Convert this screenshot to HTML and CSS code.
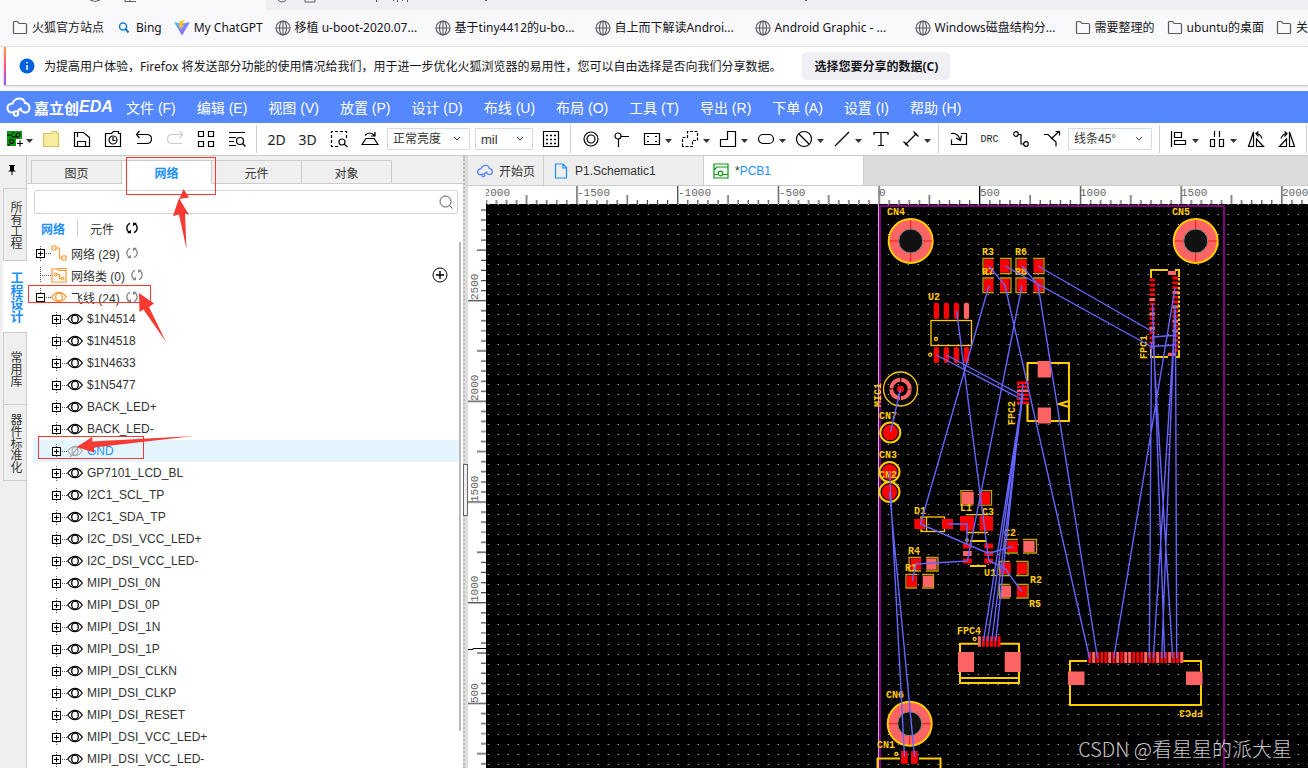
FILE: index.html
```html
<!DOCTYPE html>
<html lang="zh-CN">
<head>
    <meta charset="UTF-8">
    <meta name="viewport" content="width=device-width, initial-scale=1.0">
    <title>嘉立创EDA - PCB1</title>
    <link rel="stylesheet" href="styles.css">
</head>
<body>
    <!-- shared icons -->
    <svg class="sprite" aria-hidden="true">
        <symbol id="folder" viewBox="0 0 16 16"><path d="M1.500 12.500v-10q0-1 1-1h3l1.500 2h6.500q1 0 1 1v8q0 1-1 1h-11q-1 0-1-1z" fill="none" stroke="#5b5b66" stroke-width="1.200"/></symbol>
        <symbol id="globe" viewBox="0 0 16 16"><g fill="none" stroke="#5b5b66" stroke-width="1.200"><circle cx="8" cy="8" r="7"/><ellipse cx="8" cy="8" rx="3.500" ry="7"/><path d="M1 8h14M8 1v14"/></g></symbol>
        <symbol id="caret" viewBox="0 0 9 6"><path d="M1 1h7L4.500 5z" fill="#333"/></symbol>
        <symbol id="plus-box" viewBox="0 0 15 22"><path d="M4.500 4v3M4.500 16v3M10 11.500h5" stroke="#555" stroke-dasharray="1 1" fill="none"/><rect x=".5" y="7.500" width="8" height="8" fill="#fff" stroke="#000"/><path d="M2 11.500h5M4.500 9v5" stroke="#000"/></symbol>
        <symbol id="minus-box" viewBox="0 0 15 22"><path d="M4.500 2v5M10 11.500h5" stroke="#555" stroke-dasharray="1 1" fill="none"/><rect x=".5" y="7.500" width="8" height="8" fill="#fff" stroke="#000"/><path d="M2 11.500h5" stroke="#000"/></symbol>
        <symbol id="branch" viewBox="0 0 15 22"><path d="M4.500 3v15M6 11.500h9" stroke="#555" stroke-dasharray="1 1" fill="none"/></symbol>
        <symbol id="eye" viewBox="0 0 16 16"><g fill="none" stroke="currentColor" stroke-width="1.300"><path d="M.7 8Q4 3.300 8 3.300T15.300 8Q12 12.700 8 12.700T.7 8z"/><ellipse cx="8" cy="8" rx="3.300" ry="4"/></g></symbol>
        <symbol id="eye-off" viewBox="0 0 16 16"><g fill="none" stroke="#aaa" stroke-width="1.200"><path d="M.7 8Q4 3.300 8 3.300T15.300 8Q12 12.700 8 12.700T.7 8z"/><ellipse cx="8" cy="8" rx="3" ry="4"/><path d="M13 2L3 14"/></g></symbol>
        <symbol id="refresh" viewBox="0 0 12 12"><g fill="none" stroke="currentColor" stroke-width="1.300"><path d="M3.500 10.500Q.8 9 .8 6T4 1.300M8.500 1.500q2.700 1.500 2.700 4.500T8 10.700"/></g><path d="M1 11.300h4V7.800zM11 .7H7v3.500z" fill="currentColor"/></symbol>
        <symbol id="cloud" viewBox="0 0 24 20"><g fill="none" stroke="currentColor" stroke-width="2"><path d="M8 15.500H6Q1 15.500 1 11q0-4 5-4.500Q8 1.500 13 1.500q4.500 0 5.500 4.500 4.500.5 4.500 5 0 4-4 4.500-3 0-5-3"/><circle cx="9.500" cy="16.500" r="2.200"/><path d="M11 15q1.500-3.500 4.500-3.500"/></g></symbol>
    </svg>

    <div class="urlbar">
        <svg width="1308" height="3" fill="none" stroke="#5b5b66">
            <path d="M90 0q5 3 10 0M125 1.500h11M125 0v2M130 0v2M278 0q4 4 8 0M305 0v2h10v-2M376.500 0v2M393.500 0v1M397.500 0v2M402.500 0v1M407.500 0v2M485 .5h2M805 .5h2"/>
        </svg>
    </div>
    <nav class="bookmarks">
        <a href="#"><svg><use href="#folder"/></svg>火狐官方站点</a>
        <a href="#"><svg viewBox="0 0 16 16"><circle cx="7" cy="6.500" r="3.500" fill="none" stroke="#1b7fc9" stroke-width="1.500"/><path d="M9.500 9l3 3.500" stroke="#1b7fc9" stroke-width="2"/></svg>Bing</a>
        <a href="#"><svg viewBox="0 0 16 16"><defs><linearGradient id="vite" x1="0" y1="0" x2="1" y2="1"><stop stop-color="#41d1ff"/><stop offset="1" stop-color="#bd34fe"/></linearGradient></defs><path d="M0 2l8 13.500L16 2 8 3.500z" fill="url(#vite)"/><path d="M11 0L5.500 1.200 5 7.500l2.200-.5L6.500 10l3.500-5-2.500.5z" fill="#ffc91f"/></svg>My ChatGPT</a>
        <a href="#" class="long"><svg><use href="#globe"/></svg>移植 u-boot-2020.07...</a>
        <a href="#" class="long"><svg><use href="#globe"/></svg>基于tiny4412的u-bo...</a>
        <a href="#" class="long"><svg><use href="#globe"/></svg>自上而下解读Androi...</a>
        <a href="#" class="long"><svg><use href="#globe"/></svg>Android Graphic - ...</a>
        <a href="#" class="long"><svg><use href="#globe"/></svg>Windows磁盘结构分...</a>
        <a href="#"><svg><use href="#folder"/></svg>需要整理的</a>
        <a href="#"><svg><use href="#folder"/></svg>ubuntu的桌面</a>
        <a href="#"><svg><use href="#folder"/></svg>关</a>
    </nav>
    <div class="notice">
        <svg width="16" height="16"><circle cx="8" cy="8" r="7.500" fill="#0060df"/><path d="M8 7v5M8 4v1.500" stroke="#fff" stroke-width="1.500"/></svg>
        <span>为提高用户体验，Firefox 将发送部分功能的使用情况给我们，用于进一步优化火狐浏览器的易用性，您可以自由选择是否向我们分享数据。</span>
        <button type="button">选择您要分享的数据(C)</button>
    </div>

    <header class="menubar">
        <div class="logo"><svg><use href="#cloud"/></svg>嘉立创<em>EDA</em></div>
        <button type="button">文件 (F)</button>
        <button type="button">编辑 (E)</button>
        <button type="button">视图 (V)</button>
        <button type="button">放置 (P)</button>
        <button type="button">设计 (D)</button>
        <button type="button">布线 (U)</button>
        <button type="button">布局 (O)</button>
        <button type="button">工具 (T)</button>
        <button type="button">导出 (R)</button>
        <button type="button">下单 (A)</button>
        <button type="button">设置 (I)</button>
        <button type="button">帮助 (H)</button>
    </header>

    <div class="toolbar">
        <button type="button" class="drop first" aria-label="新建"><svg viewBox="0 0 18 18"><path d="M1 1h15v15H1z" fill="#0a9a10" stroke="none"/><path d="M1 5h4l2 2h4M7 2v2M3 16v-2"/><circle cx="12" cy="5" r="2"/><circle cx="5.500" cy="11.500" r="2"/><path d="M10 9h8v9h-8z" fill="#fff" stroke="none"/><path d="M11 13.500h6M14 10.500v6"/></svg><svg class="caret"><use href="#caret"/></svg></button>
        <button type="button" aria-label="打开"><svg viewBox="0 0 18 18"><path d="M1.500 16.500v-13h8l1-2h4v2h2v13z" fill="#f9eca0" stroke="#d8c45c"/></svg></button>
        <button type="button" aria-label="保存"><svg viewBox="0 0 18 18"><path d="M1.500 16.500v-14h9l6 5v9zM4.500 16.500v-5h8v5M4.500 3v4"/></svg></button>
        <button type="button" aria-label="历史"><svg viewBox="0 0 18 18"><path d="M1.500 16.500v-13h6l2-2h5v2h2v13z"/><circle cx="9" cy="10" r="4"/><path d="M9 7v3.500h2.500"/></svg></button>
        <button type="button" aria-label="撤销"><svg viewBox="0 0 18 18"><path d="M4.500 1L1.500 4.500 4.500 8M1.500 4.500h10q5 0 5 4.500t-5 4.500H2"/></svg></button>
        <button type="button" aria-label="重做" class="off"><svg viewBox="0 0 18 18"><path d="M13.500 1l3 3.500-3 3.500M16.500 4.500h-10q-5 0-5 4.500t5 4.500H16"/></svg></button>
        <button type="button" aria-label="阵列"><svg viewBox="0 0 18 18"><path d="M1.500 1.500h5v5h-5zM11.500 1.500h5v5h-5zM1.500 11.500h5v5h-5zM11.500 11.500h5v5h-5z"/></svg></button>
        <button type="button" aria-label="查找"><svg viewBox="0 0 18 18"><path d="M1 2.500h16M1 7.500h7M1 11.500h5M1 15.500h7"/><circle cx="12" cy="11" r="3.500"/><path d="M14.500 13.500l3 3"/></svg></button>
        <i class="sep"></i>
        <button type="button" class="word">2D</button>
        <button type="button" class="word">3D</button>
        <button type="button" aria-label="框选缩放"><svg viewBox="0 0 18 18"><path d="M8 16.500H1.500v-15h15V8" stroke-dasharray="3 2"/><circle cx="12" cy="12" r="3"/><path d="M14 14l3.500 3"/></svg></button>
        <button type="button" aria-label="亮度"><svg viewBox="0 0 18 18"><path d="M1 14.500h16l-4-6H5zM4 5.500q4.500-5 9.500 0M14 2v4h-4"/></svg></button>
        <select class="bright" aria-label="亮度"><option>正常亮度</option></select>
        <select class="unit" aria-label="单位"><option>mil</option></select>
        <button type="button" aria-label="网格"><svg viewBox="0 0 18 18"><path d="M1.500 1.500h15v15h-15z"/><path d="M4 5.500h11M4 9.500h11M4 13.500h11" stroke-width="1.500" stroke-dasharray="2 2"/></svg></button>
        <i class="sep"></i>
        <button type="button" aria-label="过孔"><svg viewBox="0 0 18 18"><circle cx="9" cy="9" r="7"/><circle cx="9" cy="9" r="4"/></svg></button>
        <button type="button" aria-label="测试点"><svg viewBox="0 0 18 18"><circle cx="5" cy="6" r="3"/><path d="M8 6.500h8M5.500 9v8"/></svg></button>
        <button type="button" class="drop" aria-label="焊盘"><svg viewBox="0 0 18 18"><path d="M1.500 3.500h15v11h-15z"/><path d="M4 6.500h2M12 6.500h2M4 11.500h2M12 11.500h2"/></svg><svg class="caret"><use href="#caret"/></svg></button>
        <button type="button" class="drop" aria-label="填充"><svg viewBox="0 0 18 18"><path d="M1.500 16.500v-9h5v-6h10v9h-5v6z" stroke-dasharray="3 1.500"/></svg><svg class="caret"><use href="#caret"/></svg></button>
        <button type="button" class="drop" aria-label="铺铜"><svg viewBox="0 0 18 18"><path d="M1.500 16.500v-7h7v-8h8v15z"/></svg><svg class="caret"><use href="#caret"/></svg></button>
        <button type="button" class="drop" aria-label="挖槽"><svg viewBox="0 0 18 18"><rect x="1.500" y="4.500" width="15" height="9" rx="4.500"/></svg><svg class="caret"><use href="#caret"/></svg></button>
        <button type="button" class="drop" aria-label="禁止区"><svg viewBox="0 0 18 18"><circle cx="9" cy="9" r="7.500"/><path d="M4 4l10 10"/></svg><svg class="caret"><use href="#caret"/></svg></button>
        <button type="button" class="drop" aria-label="线条"><svg viewBox="0 0 18 18"><path d="M2 16L16 2"/></svg><svg class="caret"><use href="#caret"/></svg></button>
        <button type="button" aria-label="文本"><svg viewBox="0 0 18 18"><path d="M2 5V2.500h14V5M9 2.500v13M6 15.500h6"/></svg></button>
        <button type="button" class="drop" aria-label="尺寸"><svg viewBox="0 0 18 18"><path d="M3.500 14.500L14.500 3.500M1.500 11.500l5 5M11.500 1.500l5 5"/><path d="M3 15l.5-3L6 14.500zM15 3l-3 .5L14.500 6z" fill="#000" stroke="none"/></svg><svg class="caret"><use href="#caret"/></svg></button>
        <i class="sep"></i>
        <button type="button" aria-label="导入变更"><svg viewBox="0 0 18 18"><path d="M11 3.500h5.500v11h-15v-5M1 3.500q7-1 9 6M6 8l4.500 2.500 1-5"/></svg></button>
        <button type="button" class="word drc">DRC</button>
        <button type="button" aria-label="布线"><svg viewBox="0 0 18 18"><circle cx="4" cy="4" r="2.300"/><circle cx="14" cy="14" r="2.300"/><path d="M6 4.500h3v9.500h3"/></svg></button>
        <button type="button" aria-label="布线跟随"><svg viewBox="0 0 18 18"><path d="M1 4.500h4l8 7.500v4.500M8 9l8-7.500M12.500 1.500h4v4"/></svg></button>
        <select class="angle" aria-label="布线拐角"><option>线条45°</option></select>
        <i class="sep"></i>
        <button type="button" class="drop" aria-label="对齐"><svg viewBox="0 0 18 18"><path d="M1.500 1v16M4.500 2.500h7v5h-7zM4.500 10.500h11v4h-11z"/></svg><svg class="caret"><use href="#caret"/></svg></button>
        <button type="button" class="drop" aria-label="分布"><svg viewBox="0 0 18 18"><path d="M6.500 1v6M11.500 1v6M2.500 9.500h4v7h-4zM11.500 9.500h4v7h-4z"/></svg><svg class="caret"><use href="#caret"/></svg></button>
        <button type="button" aria-label="左旋"><svg viewBox="0 0 18 18"><path d="M6.500 2v14.500H1.500zM9.500 9v7.500h7zM9 3.500q4 0 6 5M11.500 1.500L9 3.500l2.500 3"/></svg></button>
        <button type="button" aria-label="右旋"><svg viewBox="0 0 18 18"><path d="M11.500 2v14.500h5zM8.500 9v7.500h-7zM9 3.500q-4 0-6 5M6.500 1.500L9 3.500l-2.500 3"/></svg></button>
        <i class="sep"></i>
    </div>

    <main class="workspace">
        <nav class="rail">
            <button type="button" class="pin" aria-label="固定"><svg width="10" height="12"><path d="M2 1h6v1H7v4l2 1.500H1L3 6V2H2zM4.500 7h1v4h-1z"/></svg></button>
            <button type="button">所有工程</button>
            <button type="button" class="on">工程设计</button>
            <button type="button">常用库</button>
            <button type="button" class="tall">器件标准化</button>
        </nav>

        <aside class="panel">
            <div class="panel-tabs">
                <button type="button">图页</button>
                <button type="button" class="on">网络</button>
                <button type="button">元件</button>
                <button type="button">对象</button>
            </div>
            <div class="search">
                <input type="text" aria-label="搜索">
                <svg width="14" height="14" fill="none" stroke="#555"><circle cx="6.500" cy="6.500" r="5.500"/><path d="M10.500 10.500l3 3"/></svg>
            </div>
            <div class="subtabs">
                <button type="button" class="on">网络</button>
                <button type="button">元件</button>
                <svg class="refresh"><use href="#refresh"/></svg>
            </div>
            <ul class="tree">
                <li><svg class="toggle"><use href="#plus-box"/></svg><svg class="icon" viewBox="0 0 16 16" fill="none" stroke="#f93" stroke-width="1.200"><path d="M1 1h4v4H1zM11 11h4v4h-4zM5 3h3.500v10H11"/></svg>网络 (29)<svg class="refresh"><use href="#refresh"/></svg></li>
                <li><svg class="toggle"><use href="#branch"/></svg><svg class="icon" viewBox="0 0 16 16" fill="none" stroke="#f93" stroke-width="1.200"><path d="M1 15V2h5l1.500 1.500H15V15zM6 1.500h9v2"/><circle cx="4.500" cy="7.500" r="1.500"/><circle cx="11.500" cy="11.500" r="1.500"/><path d="M6 7.500h2.500v4H10"/></svg>网络类 (0)<svg class="refresh"><use href="#refresh"/></svg>
                    <button type="button" class="add" aria-label="新增"><svg width="16" height="16" fill="none" stroke="#000"><circle cx="8" cy="8" r="7"/><path d="M8 4v8M4 8h8" stroke-width="1.400"/></svg></button></li>
                <li><svg class="toggle"><use href="#minus-box"/></svg><svg class="icon orange"><use href="#eye"/></svg>飞线 (24)<svg class="refresh"><use href="#refresh"/></svg></li>
                <li class="net"><svg class="toggle"><use href="#plus-box"/></svg><svg class="icon"><use href="#eye"/></svg>$1N4514</li>
                <li class="net"><svg class="toggle"><use href="#plus-box"/></svg><svg class="icon"><use href="#eye"/></svg>$1N4518</li>
                <li class="net"><svg class="toggle"><use href="#plus-box"/></svg><svg class="icon"><use href="#eye"/></svg>$1N4633</li>
                <li class="net"><svg class="toggle"><use href="#plus-box"/></svg><svg class="icon"><use href="#eye"/></svg>$1N5477</li>
                <li class="net"><svg class="toggle"><use href="#plus-box"/></svg><svg class="icon"><use href="#eye"/></svg>BACK_LED+</li>
                <li class="net"><svg class="toggle"><use href="#plus-box"/></svg><svg class="icon"><use href="#eye"/></svg>BACK_LED-</li>
                <li class="net picked"><svg class="toggle"><use href="#plus-box"/></svg><svg class="icon"><use href="#eye-off"/></svg>GND</li>
                <li class="net"><svg class="toggle"><use href="#plus-box"/></svg><svg class="icon"><use href="#eye"/></svg>GP7101_LCD_BL</li>
                <li class="net"><svg class="toggle"><use href="#plus-box"/></svg><svg class="icon"><use href="#eye"/></svg>I2C1_SCL_TP</li>
                <li class="net"><svg class="toggle"><use href="#plus-box"/></svg><svg class="icon"><use href="#eye"/></svg>I2C1_SDA_TP</li>
                <li class="net"><svg class="toggle"><use href="#plus-box"/></svg><svg class="icon"><use href="#eye"/></svg>I2C_DSI_VCC_LED+</li>
                <li class="net"><svg class="toggle"><use href="#plus-box"/></svg><svg class="icon"><use href="#eye"/></svg>I2C_DSI_VCC_LED-</li>
                <li class="net"><svg class="toggle"><use href="#plus-box"/></svg><svg class="icon"><use href="#eye"/></svg>MIPI_DSI_0N</li>
                <li class="net"><svg class="toggle"><use href="#plus-box"/></svg><svg class="icon"><use href="#eye"/></svg>MIPI_DSI_0P</li>
                <li class="net"><svg class="toggle"><use href="#plus-box"/></svg><svg class="icon"><use href="#eye"/></svg>MIPI_DSI_1N</li>
                <li class="net"><svg class="toggle"><use href="#plus-box"/></svg><svg class="icon"><use href="#eye"/></svg>MIPI_DSI_1P</li>
                <li class="net"><svg class="toggle"><use href="#plus-box"/></svg><svg class="icon"><use href="#eye"/></svg>MIPI_DSI_CLKN</li>
                <li class="net"><svg class="toggle"><use href="#plus-box"/></svg><svg class="icon"><use href="#eye"/></svg>MIPI_DSI_CLKP</li>
                <li class="net"><svg class="toggle"><use href="#plus-box"/></svg><svg class="icon"><use href="#eye"/></svg>MIPI_DSI_RESET</li>
                <li class="net"><svg class="toggle"><use href="#plus-box"/></svg><svg class="icon"><use href="#eye"/></svg>MIPI_DSI_VCC_LED+</li>
                <li class="net"><svg class="toggle"><use href="#plus-box"/></svg><svg class="icon"><use href="#eye"/></svg>MIPI_DSI_VCC_LED-</li>
            </ul>
        </aside>

        <div class="splitter"><i></i></div>

        <section class="editor">
            <div class="doc-tabs">
                <button type="button" class="home"><svg><use href="#cloud"/></svg>开始页</button>
                <button type="button" class="doc"><svg viewBox="0 0 16 16" fill="none" stroke="#1e90ff" stroke-width="1.200"><path d="M2.500 1h7.500l3.500 3.500V15h-11zM10 1v4h3.500"/></svg>P1.Schematic1</button>
                <button type="button" class="doc on"><svg viewBox="0 0 16 16" fill="none" stroke="#0a9a10" stroke-width="1.200"><path d="M1 1h14v14H1zM1 7l3-3h11M1 11.500h4M10 11.500h5"/><circle cx="7.500" cy="10.500" r="2.300"/></svg><span><b>*</b>PCB1</span></button>
            </div>
            <div class="canvas-grid">
                <div class="corner"></div>
                <svg class="ruler">
                    <defs>
                        <pattern id="hticks" x="-10.400" width="100.700" height="18" patternUnits="userSpaceOnUse">
                            <path d="M.7 0v18" stroke="#555" stroke-width="1.400"/>
                            <path d="M10.800 14v4M20.800 14v4M30.900 14v4M41 14v4M51 9v9M61.100 14v4M71.200 14v4M81.300 14v4M91.300 14v4" stroke="#444" stroke-width="1.200"/>
                        </pattern>
                    </defs>
                    <rect width="100%" height="18" fill="url(#hticks)"/>
                    <path d="M493.500 0v18" stroke="#000"/>
                    <text x="-9" y="10">-2000</text>
                    <text x="91" y="10">-1500</text>
                    <text x="192" y="10">-1000</text>
                    <text x="293" y="10">-500</text>
                    <text x="393" y="10">0</text>
                    <text x="494" y="10">500</text>
                    <text x="594" y="10">1000</text>
                    <text x="695" y="10">1500</text>
                    <text x="796" y="10">2000</text>
                </svg>
                <svg class="ruler">
                    <defs>
                        <pattern id="vticks" y="-4.800" width="18" height="100.700" patternUnits="userSpaceOnUse">
                            <path d="M0 .7h18" stroke="#555" stroke-width="1.400"/>
                            <path d="M13 10.800h5M13 20.800h5M13 30.900h5M13 41h5M9 51h9M13 61.100h5M13 71.200h5M13 81.300h5M13 91.300h5" stroke="#444" stroke-width="1.200"/>
                        </pattern>
                    </defs>
                    <rect width="18" height="100%" fill="url(#vticks)"/>
                    <path d="M0 445.500h5v-1h13" stroke="#000" fill="none"/>
                    <text transform="translate(10 96) rotate(-90)">2500</text>
                    <text transform="translate(10 197) rotate(-90)">2000</text>
                    <text transform="translate(10 298) rotate(-90)">1500</text>
                    <text transform="translate(10 398) rotate(-90)">1000</text>
                    <text transform="translate(10 499) rotate(-90)">500</text>
                </svg>
                <svg class="board">
                    <defs>
                        <pattern id="dots" width="10" height="10" patternUnits="userSpaceOnUse"><path d="M1 0h1v1H1z" fill="#444"/><path d="M2 0h1v1H2z" fill="#aaa"/></pattern>
                        <g id="hole">
                            <circle r="22" fill="#ff6464" stroke="#fc0" stroke-width="2"/>
                            <path d="M-21 0h42M0-21v42" stroke="#f01818"/>
                            <circle r="12" fill="#111" stroke="#888"/>
                        </g>
                        <g id="testpoint"><circle r="10" fill="#000" stroke="#fc0" stroke-width="2"/><circle r="7.700" fill="#f00"/></g>
                    </defs>
                    <rect width="100%" height="100%" fill="url(#dots)"/>
                    <g transform="translate(-486 -204)">
                        <!-- board outline -->
                        <path d="M880 800V206h344v594" class="outline"/>
                        <path d="M878.500 204v600" stroke="#d8a8d8"/>

                        <!-- silkscreen -->
                        <g class="silk">
                            <rect x="931" y="320.500" width="40.500" height="25"/>
                            <circle cx="936" cy="339" r="1.500"/><circle cx="930.300" cy="354.700" r="1.500"/>
                            <circle cx="900.500" cy="389" r="17"/>
                            <rect x="921" y="517" width="23.500" height="14.500"/><path d="M926.500 517v14.500M921 531h2"/>
                            <path d="M966 514.700h22M966 532.500h22"/>
                            <circle cx="967" cy="540" r="1.200"/><circle cx="974.700" cy="639" r="1.500"/><circle cx="896.300" cy="754" r="1.500"/>
                        </g>
                        <g class="silk thick">
                            <path d="M1038 363h-10.500v18M1051 363h18v58h-18M1038 421h-10.500v-17M1069 401l-10 3 10 3"/>
                            <path d="M970 541h16M970 566h16"/>
                            <path d="M978 643.700h-18V683h59v-39.300h-19M960 678h59"/>
                            <path d="M1087 661h-17v44h131v-44h-18"/>
                            <path d="M1168 270h-17v8M1175 270h4v7M1168 357h-17v-8M1176 357h3v-5"/>
                            <path d="M1179 278v76" stroke-dasharray="2.500 2"/>
                            <path d="M877.500 775v-16.500H900M919 758.500h21.500V775"/>
                        </g>
                        <g class="silk frame">
                            <path d="M994 258.500h-11v15h11M1000 258.500h11v15h-11M1027 258.500h-11v15h11M1033 258.500h11v15h-11"/>
                            <path d="M994 278h-11v14.500h11M1000 278h11v14.500h-11M1027 278h-11v14.500h11M1033 278h11v14.500h-11"/>
                            <path d="M973 490.700h-12v14.500h12M979 490.700h12.500v14.500H979"/>
                            <path d="M1018 539.500h-13V553h13M1023 539.500h13.500V553H1023"/>
                            <path d="M921 557.500h-12V571h12M926 557.500h12V571h-12"/>
                            <path d="M917 574.500h-11V588h11M922 574.500h11.500V588H922"/>
                            <path d="M1010 561.500h-10.500V575.500h10.500M1016 561.500h12V575.500h-12"/>
                            <path d="M1010 584.500h-10.500V598h10.500M1016 584.500h12V598h-12"/>
                        </g>

                        <!-- pads -->
                        <use href="#hole" x="910.700" y="241"/>
                        <use href="#hole" x="1195.700" y="241"/>
                        <use href="#hole" x="909.700" y="723.700"/>
                        <use href="#testpoint" x="890.300" y="432.500"/>
                        <use href="#testpoint" x="889.500" y="472"/>
                        <use href="#testpoint" x="889.500" y="492"/>
                        <circle cx="900.500" cy="389" r="9.300" fill="none" stroke="#ff6464" stroke-width="4" stroke-dasharray="13.600 1" stroke-dashoffset="-.5"/>
                        <circle cx="900.500" cy="389" r="3.500" fill="#f00"/>
                        <g class="pad">
                            <path d="M984 259.500h9.500v13H984zM1000 259.500h9.500v13h-9.500zM1017.300 259.500h9.500v13h-9.500zM1033.500 259.500h9.500v13h-9.500z"/>
                            <path d="M984 279h9.500v12.500H984zM1000 279h9.500v12.500h-9.500zM1017.300 279h9.500v12.500h-9.500zM1033.500 279h9.500v12.500h-9.500z"/>
                            <rect x="933.700" y="302.700" width="5.300" height="16.300" rx="2"/><rect x="943.700" y="302.700" width="5.300" height="16.300" rx="2"/><rect x="953.700" y="302.700" width="5.300" height="16.300" rx="2"/>
                            <rect x="933.700" y="347" width="5.300" height="16" rx="2"/><rect x="943.700" y="347" width="5.300" height="16" rx="2"/><rect x="953.700" y="347" width="5.300" height="16" rx="2"/><rect x="963.800" y="347" width="5.300" height="16" rx="2"/>
                            <path d="M1017 381.500h12v2.500h-12zM1017 385.500h12v2.500h-12zM1017 393.500h12v2.500h-12zM1017 397.500h12v2.500h-12zM1017 401.500h12v2.500h-12z"/>
                            <path d="M914.300 519h11v10h-11zM942 519h11v10h-11zM979 492h11v12.500h-11zM960 516h14v14.700h-14zM979.500 516h13.500v14.700h-13.500z"/>
                            <path d="M1007.300 541h10.500v11h-10.500zM963 543.500h8.700v5H963zM963 558.500h8.700v5H963zM984.300 543.500h8.700v5h-8.700zM984.300 551h8.700v5h-8.700zM984.300 558.500h8.700v5h-8.700z"/>
                            <path d="M910.700 558.500H921v11.300h-10.300zM906.700 575.700H917V587h-10.300zM1000.500 562.700h10.300V574h-10.300zM1017 562.700h10v11.300h-10zM1017 585.700h10V597h-10z"/>
                            <path d="M982 636.300h2.800v10.500H982zM986 636.300h2.800v10.500H986zM990 636.300h2.800v10.500H990zM993.700 636.300h2.800v10.500h-2.800zM997.700 636.300h2.800v10.500h-2.800z"/>
                            <path d="M901 751h6.700v12.700H901zM911 751h6.700v12.700H911z"/>
                        </g>
                        <g class="pad pink">
                            <rect x="963.800" y="302.700" width="5.300" height="16.300" rx="2"/>
                            <path d="M1037.700 361H1051v16.500h-13.300zM1037.700 407.500H1051v16h-13.300zM1017 389.500h12v2.500h-12z"/>
                            <path d="M961.700 492h12v12.500h-12zM1023.300 541h11.300v11h-11.300zM963 551h8.700v5H963zM926.300 558.500h10.300v11.300h-10.300zM922.700 575.700H933V587h-10.300zM1001 585.700h10V597h-10z"/>
                            <path d="M978 636.300h2.800v10.500H978zM958 652h16v20h-16zM1004.700 652h16v20h-16zM1068 671.500h16.500V685H1068zM1186 671.500h16.500V685H1186z"/>
                            <path d="M1168 271h8v4h-8zM1168 352.700h8v3.300h-8z"/>
                        </g>
                        <g class="pins">
                            <path d="M1152.300 278.800v70" stroke-width="5.500" stroke-dasharray="2.800 2"/>
                            <path d="M1175.200 276.600v75" stroke-width="5.500" stroke-dasharray="2.800 2"/>
                            <path d="M1088.300 657.500h95" stroke-width="11" stroke-dasharray="2.900 1.100"/>
                        </g>
                        <g class="pad pink">
                            <path d="M1149.500 298h5.500v3h-5.500zM1149.500 312.400h5.500v3h-5.500zM1149.500 326.800h5.500v3h-5.500z"/>
                            <path d="M1172.500 291h5.500v3h-5.500zM1172.500 305.400h5.500v3h-5.500zM1172.500 319.800h5.500v3h-5.500zM1172.500 329.400h5.500v3h-5.500z"/>
                            <path d="M1092.300 652h2.900v11h-2.900zM1108.300 652h2.900v11h-2.900zM1116.300 652h2.900v11h-2.900zM1124.300 652h2.900v11h-2.900zM1128.300 652h2.900v11h-2.900zM1144.300 652h2.900v11h-2.900zM1156.300 652h2.900v11h-2.900zM1168.300 652h2.900v11h-2.900zM1180.300 652h2.900v11h-2.900z"/>
                        </g>

                        <!-- designators -->
                        <g class="names">
                            <text x="887" y="215">CN4</text><text x="1172" y="215">CN5</text>
                            <text x="982" y="255">R3</text><text x="1015" y="255">R6</text>
                            <text x="982" y="275">R7</text><text x="1015" y="275">R8</text>
                            <text x="928" y="300">U2</text>
                            <text x="879" y="419">CN7</text><text x="879" y="458">CN3</text><text x="879" y="478">CN2</text>
                            <text x="914" y="514">D1</text><text x="960" y="511">L1</text><text x="982" y="515">C3</text>
                            <text x="1004" y="536">C2</text><text x="984" y="576">U1</text>
                            <text x="908" y="554">R4</text><text x="905" y="571">R1</text>
                            <text x="1030" y="583">R2</text><text x="1029" y="607">R5</text>
                            <text x="957" y="634">FPC4</text><text x="886" y="698">CN6</text><text x="877" y="748">CN1</text>
                            <text transform="translate(1147 359) rotate(-90)">FPC1</text>
                            <text transform="translate(1015 425) rotate(-90)">FPC2</text>
                            <text transform="translate(881 407) rotate(-90)">MIC1</text>
                            <text transform="translate(1203 710) rotate(180)">FPC3</text>
                        </g>

                        <!-- ratlines -->
                        <g class="rats">
                            <path d="M989 266l16 19.500L1089.500 658M1005 266l147 81M1038 266l115 66M1022 266l16 19L1097.500 658"/>
                            <path d="M989 285.500L920.500 524M1022 285.500L967.500 560.500M956.700 311l32 249.500"/>
                            <path d="M936.300 355l86.700 45M946.300 355l76.700 41"/>
                            <path d="M1021.500 402l-38 239M1022 398l-34.500 243M1023 394l-31.300 247M1023 384l-27.300 257"/>
                            <path d="M900.500 389l-10 43M889.500 472l15 285M889.500 492l25 265"/>
                            <path d="M920.300 524l68.200 29.500 24-7M947.500 524H967v20M912.300 581l3.700-17 51.500-3M988.700 560.500l16.300 8 16.700 23"/>
                            <path d="M1175 288l-61.300 370M1151.500 342l-2.200 316M1152.500 304l12.200 354M1175 305l-13.300 353M1175.500 310l-22.200 348M1152.700 335l20 323M1175.500 318l1.200 340"/>
                            <path d="M1152.700 337l22.500-1.700M1151 346.500l24-1.500"/>
                        </g>
                    </g>
                </svg>
            </div>
            <span class="watermark">CSDN @看星星的派大星</span>
        </section>

        <!-- hand-drawn markers over the net panel -->
        <svg class="marks">
            <g fill="none" stroke="#f93a32">
                <rect x="126.500" y="1.500" width="89" height="37"/>
                <rect x="28.500" y="129.500" width="122" height="17"/>
                <rect x="38.500" y="280.500" width="105" height="22"/>
            </g>
            <g fill="#f93a32">
                <path d="M183.500 33l5.500 8.500-9.500 1.500z"/>
                <path d="M179 42l-6 18 6-1.500L186.500 93 185 57.500l4 1.500z"/>
                <path d="M139 137l.5 19 4-2.500L166 186 149 151l5-3.500z"/>
                <path d="M76.700 291l15.500-10v4.500L194 280 94 291.500v5z"/>
            </g>
        </svg>
    </main>
</body>
</html>
```
FILE: styles.css
```css
* {
    box-sizing: border-box;
}
body {
    margin: 0;
    height: 100vh;
    display: flex;
    flex-direction: column;
    overflow: hidden;
    font-family: "Liberation Sans", "Noto Sans CJK SC", sans-serif;
    font-size: 12px;
    color: #333;
    background: #f9f9fb;
}
button {
    margin: 0;
    padding: 0;
    border: none;
    background: none;
    font: inherit;
    color: inherit;
    white-space: nowrap;
}
svg {
    display: block;
    flex: none;
}
.sprite {
    position: absolute;
    width: 0;
    height: 0;
}

/* browser chrome */
.urlbar {
    flex: none;
    height: 10px;
    overflow: hidden;
    background: linear-gradient(to right, #f9f9fb 266px, #f0f0f4 266px);
}
.bookmarks {
    flex: none;
    display: flex;
    align-items: center;
    height: 37px;
    padding-left: 6px;
    overflow: hidden;
    border-bottom: 1px solid #e3e3e6;
    font-family: "Noto Sans", "Noto Sans CJK SC", sans-serif;
}
.bookmarks a {
    flex: none;
    display: flex;
    align-items: center;
    gap: 4px;
    padding: 0 6px;
    line-height: 20px;
    color: #15141a;
    text-decoration: none;
    white-space: nowrap;
}
.bookmarks .long {
    width: 160px;
}
.bookmarks svg {
    width: 16px;
    height: 16px;
}
.notice {
    flex: none;
    display: flex;
    align-items: center;
    height: 38px;
    margin: 0 0 6px 4px;
    padding-left: 13px;
    border-left: 2px solid;
    border-image: linear-gradient(#ffa436, #ff4f8b, #9059ff) 1;
    background: #fff;
    box-shadow: 0 1px 2px #bbb;
    color: #15141a;
    font-family: "Noto Sans", "Noto Sans CJK SC", sans-serif;
    white-space: nowrap;
}
.notice span {
    margin: 0 21px 0 9px;
}
.notice button {
    height: 28px;
    padding: 0 12px;
    border-radius: 4px;
    background: #f0f0f4;
    font-weight: bold;
}

/* menu bar */
.menubar {
    flex: none;
    display: flex;
    align-items: center;
    gap: 21px;
    height: 32px;
    padding-left: 6px;
    background: #5588ff;
    color: #fff;
    font-size: 14px;
}
.logo {
    display: flex;
    align-items: center;
    width: 99px;
    font-size: 15px;
    font-weight: bold;
    white-space: nowrap;
}
.logo svg {
    width: 25px;
    height: 20px;
    margin-right: 3px;
}
.logo em {
    font-size: 16px;
}

/* toolbar */
.toolbar {
    flex: none;
    display: flex;
    align-items: center;
    height: 33px;
    overflow: hidden;
    border-bottom: 1px solid #ccc;
    background: #fff;
}
.toolbar button {
    flex: none;
    display: flex;
    align-items: center;
    justify-content: center;
    width: 31px;
    height: 32px;
}
.toolbar svg {
    width: 18px;
    height: 18px;
    fill: none;
    stroke: #000;
    stroke-width: 1.2px;
}
.toolbar .caret {
    width: 9px;
    height: 6px;
    margin-top: 4px;
    stroke: none;
}
.toolbar .drop {
    width: 38px;
    gap: 3px;
    padding-left: 4px;
}
.toolbar .first {
    width: 35px;
    gap: 1px;
    padding-left: 4px;
}
.toolbar .off svg {
    stroke: #ccc;
}
.toolbar .word {
    font-family: "Noto Sans", sans-serif;
    font-size: 14px;
    color: #222;
}
.toolbar .drc {
    font-family: "Liberation Mono", monospace;
    font-size: 10px;
}
.sep {
    flex: none;
    width: 1px;
    height: 28px;
    margin: 0 4px;
    background: #ccc;
}
select {
    flex: none;
    height: 22px;
    padding: 0 5px;
    appearance: none;
    border: 1px solid #d5dae8;
    border-radius: 1px;
    background: #fff url("data:image/svg+xml,%3Csvg xmlns='http://www.w3.org/2000/svg' width='8' height='6'%3E%3Cpath d='M1 1l3 3 3-3' fill='none' stroke='%23444'/%3E%3C/svg%3E") no-repeat right 8px center;
    color: #333;
    font: inherit;
}
.bright {
    width: 83px;
    margin-left: 2px;
}
.unit {
    width: 58px;
    margin: 0 2px 0 5px;
    font-size: 13px;
}
.angle {
    width: 84px;
    margin: 0 3px 0 1px;
}

/* workspace */
.workspace {
    position: relative;
    flex: 1;
    min-height: 0;
    display: flex;
    background: #fff;
}
.rail {
    flex: none;
    width: 27px;
    display: flex;
    flex-direction: column;
    align-items: flex-end;
    background: #efefef;
    border-right: 1px solid #ccc;
}
.rail button {
    width: 23px;
    height: 72px;
    writing-mode: vertical-rl;
    line-height: 18px;
    border: 1px solid #ccc;
    border-width: 1px 0 0 1px;
}
.rail .pin {
    display: flex;
    align-items: flex-start;
    height: 32px;
    padding: 8px 9px 8px 3px;
    border: none;
}
.rail .on {
    width: 24px;
    margin-right: -1px;
    border-left-color: #fff;
    background: #fff;
    color: #1e90ff;
    font-size: 13px;
    font-weight: bold;
}
.rail .tall {
    height: 77px;
    border-bottom-width: 1px;
}
.panel {
    flex: none;
    width: 436px;
    overflow: hidden;
}
.panel-tabs {
    display: flex;
    align-items: flex-end;
    height: 28px;
    padding-left: 4px;
    background: #efefef;
    box-shadow: inset 0 -1px #ccc;
}
.panel-tabs button {
    width: 90px;
    height: 24px;
    border: 1px solid #ccc;
    border-left-width: 0;
}
.panel-tabs button:first-child {
    width: 91px;
    border-left-width: 1px;
}
.panel-tabs .on {
    border-bottom-color: #fff;
    background: #fff;
    color: #1e90ff;
    font-weight: bold;
}
.search {
    display: flex;
    align-items: center;
    height: 24px;
    margin: 6px 5px 0 7px;
    padding-right: 4px;
    border: 1px solid #d4d4d4;
    border-radius: 2px;
}
.search input {
    flex: 1;
    height: 20px;
    border: none;
    outline: none;
}
.subtabs {
    display: flex;
    align-items: center;
    height: 28px;
    padding-left: 14px;
}
.subtabs button + button {
    margin-left: 12px;
    padding-left: 12px;
    border-left: 1px solid #ccc;
}
.subtabs .on {
    color: #1e90ff;
    font-weight: bold;
}
.refresh {
    width: 12px;
    height: 12px;
    margin-left: 6px;
    color: #888;
}
.subtabs .refresh {
    margin-left: 12px;
    color: #000;
}
.tree {
    position: relative;
    margin: 0 3px 0 6px;
    padding: 0;
    list-style: none;
}
.tree::after {
    content: "";
    position: absolute;
    top: 0;
    right: -1px;
    width: 2px;
    height: 489px;
    background: #bbb;
}
.tree li {
    display: flex;
    align-items: center;
    height: 22px;
    padding-left: 3px;
}
.tree .net {
    padding-left: 19px;
}
.tree .picked {
    background: #e5f5ff;
    color: #1e90ff;
}
.toggle {
    width: 15px;
    height: 22px;
}
.icon {
    width: 16px;
    height: 16px;
    margin-right: 4px;
    color: #000;
}
.orange {
    color: #f93;
}
.add {
    margin: 0 12px 0 auto;
}
.splitter {
    flex: none;
    width: 5px;
    display: flex;
    align-items: center;
    border-left: 2px dotted #bbb;
    background: #ddd;
}
.splitter i {
    width: 5px;
    height: 52px;
    margin: 56px 0 0 -2px;
    flex: none;
    border: 1px solid #666;
    background: #eee;
}

/* editor */
.editor {
    position: relative;
    flex: 1;
    min-width: 0;
    display: flex;
    flex-direction: column;
}
.doc-tabs {
    flex: none;
    display: flex;
    height: 30px;
    background: #dcdcdc;
    border-bottom: 1px solid #ccc;
}
.doc-tabs button {
    display: flex;
    align-items: center;
    gap: 6px;
    padding-left: 9px;
    border-right: 1px solid #ccc;
    background: #eee;
}
.doc-tabs svg {
    width: 16px;
    height: 16px;
    color: #5588ff;
}
.doc-tabs .home {
    width: 76px;
}
.doc-tabs .doc {
    width: 160px;
}
.doc-tabs .on {
    background: #fff;
    color: #1e90ff;
}
.doc-tabs b {
    color: #333;
    font-weight: normal;
}
.canvas-grid {
    flex: 1;
    min-height: 0;
    display: grid;
    grid-template: 18px 1fr / 18px 1fr;
}
.ruler,
.board {
    width: 100%;
    height: 100%;
    overflow: hidden;
}
.ruler text {
    font: 11px "Liberation Mono", monospace;
    fill: #666;
}
.board {
    background: #000;
}
.outline {
    fill: none;
    stroke: #800080;
    stroke-width: 2px;
}
.silk {
    fill: none;
    stroke: #fc0;
    stroke-width: 1.3px;
}
.thick {
    stroke-width: 2px;
}
.frame {
    stroke: #c9a000;
}
.pad {
    fill: #f00;
}
.pink {
    fill: #ff6464;
}
.pins {
    fill: none;
    stroke: #f00;
}
.names text {
    font: bold 10px "Liberation Mono", monospace;
    fill: #fc0;
}
.rats {
    fill: none;
    stroke: #6464ff;
    stroke-width: 1.4px;
}
.watermark {
    position: absolute;
    right: 16px;
    bottom: 5px;
    font-family: "Noto Sans CJK SC", sans-serif;
    font-size: 20px;
    font-weight: 300;
    color: #c8c8c8;
}
.marks {
    position: absolute;
    top: 0;
    left: 0;
    width: 463px;
    height: 100%;
    pointer-events: none;
}
```
